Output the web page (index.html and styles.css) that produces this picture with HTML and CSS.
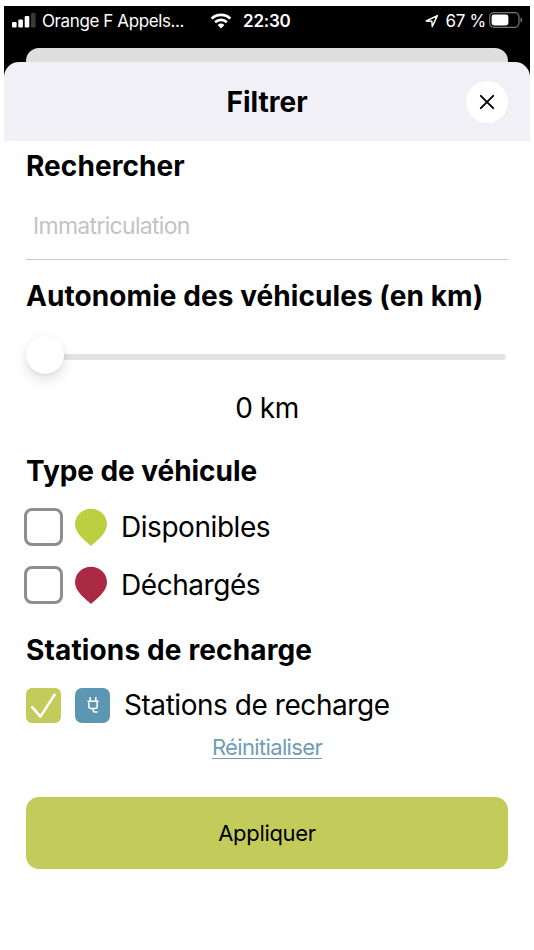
FILE: index.html
```
<!DOCTYPE html>
<html lang="fr">
<head>
  <meta charset="UTF-8">
  <title>Filtrer</title>
  <link rel="stylesheet" href="styles.css">
</head>
<body>
  <div class="phone">
    <div class="status">
      <svg class="signal" width="24" height="16" viewBox="0 0 24 16">
        <rect x="0" y="10" width="4.6" height="5.5" rx="1.2" fill="#fff"/>
        <rect x="6.3" y="7.5" width="4.6" height="8" rx="1.2" fill="#fff"/>
        <rect x="12.7" y="4" width="4.6" height="11.5" rx="1.2" fill="#fff"/>
        <rect x="19" y="1" width="4.6" height="14.5" rx="1.2" fill="#3a3a3a"/>
      </svg>
      <span class="carrier">Orange F Appels...</span>
      <svg class="wifi" width="22" height="16" viewBox="0 0 22 16">
        <path d="M1.6 5.6C6.8 .6 15.2 .6 20.4 5.6" fill="none" stroke="#fff" stroke-width="2.7"/>
        <path d="M5.1 9.2C8.4 6.1 13.6 6.1 16.9 9.2" fill="none" stroke="#fff" stroke-width="2.6"/>
        <path d="M7.6 11.9Q11 9 14.4 11.9L11 15.4Z" fill="#fff"/>
      </svg>
      <span class="time">22:30</span>
      <svg class="location" width="14" height="14" viewBox="0 0 14 14">
        <path d="M1.2 7L12.4 1.6L7.2 12.6L6.9 7.2Z" fill="none" stroke="#fff" stroke-width="1.4" stroke-linejoin="round"/>
      </svg>
      <span class="percent">67 %</span>
      <svg class="battery" width="34" height="16" viewBox="0 0 34 16">
        <rect x=".7" y=".7" width="29.3" height="14.6" rx="4.2" fill="none" stroke="#777" stroke-width="1.2"/>
        <rect x="2.6" y="2.6" width="16.8" height="10.8" rx="2.4" fill="#fff"/>
        <path d="M31.5 5.5Q33.3 6.2 33.3 8T31.5 10.5Z" fill="#777"/>
      </svg>
    </div>
    <div class="back-sheet"></div>
    <div class="header">
      <h1 class="title">Filtrer</h1>
      <button class="close" type="button" aria-label="Fermer">
        <svg width="16" height="16" viewBox="0 0 16 16">
          <path d="M1.8 1.8L14.2 14.2M14.2 1.8L1.8 14.2" stroke="#000" stroke-width="1.9" stroke-linecap="round"/>
        </svg>
      </button>
    </div>
  </div>
  <form class="content" action="#">
    <h2 class="t-search">Rechercher</h2>
    <input class="search" type="text" placeholder="Immatriculation">

    <h2 class="t-range">Autonomie des véhicules (en km)</h2>
    <div class="slider">
      <div class="knob"></div>
      <div class="track"></div>
    </div>
    <p class="value">0 km</p>

    <h2 class="t-type">Type de véhicule</h2>
    <label class="row">
      <span class="box"></span>
      <svg class="pin" width="32" height="38" viewBox="0 0 32 38">
        <path d="M16 38C11 33.4 0 25.5 0 16.5A16 15.8 0 0 1 32 16.5C32 25.5 21 33.4 16 38Z" fill="#bccf41"/>
      </svg>
      <span class="name">Disponibles</span>
    </label>
    <label class="row">
      <span class="box"></span>
      <svg class="pin" width="32" height="38" viewBox="0 0 32 38">
        <path d="M16 38C11 33.4 0 25.5 0 16.5A16 15.8 0 0 1 32 16.5C32 25.5 21 33.4 16 38Z" fill="#ab2a43"/>
      </svg>
      <span class="name">Déchargés</span>
    </label>

    <h2 class="t-station">Stations de recharge</h2>
    <label class="row row-station">
      <span class="box checked">
        <svg width="35" height="35" viewBox="0 0 35 35">
          <path d="M6.2 19.2L14.4 28.6L28.6 6.8" fill="none" stroke="#fff" stroke-width="2.6" stroke-linecap="round" stroke-linejoin="round"/>
        </svg>
      </span>
      <span class="plug">
        <svg width="35" height="35" viewBox="0 0 35 35" fill="none" stroke="#fff" stroke-width="1.5">
          <path d="M15.2 9V13.5M20.8 9V13.5M12.5 13.3H23.5M13.8 13.3V18.2Q13.8 20.4 16 20.4H20Q22.2 20.4 22.2 18.2V13.3M18 20.4V22.3Q18 24 19.7 24H22.5"/>
        </svg>
      </span>
      <span class="name">Stations de recharge</span>
    </label>
    <a class="reset" href="#">Réinitialiser</a>
    <button class="apply" type="button">Appliquer</button>
  </form>
</body>
</html>
```
FILE: styles.css
```
*{
  padding: 0;
  margin: 0;
  box-sizing: border-box;
}
body{
  padding-top: 6px;
  background-color: #fff;
  color: #000;
  font-family: Inter, "Liberation Sans", sans-serif;
}
svg{
  display: block;
  flex: none;
}
.phone{
  margin: 0 4px;
  background-color: #000;
}
.status{
  display: flex;
  align-items: center;
  height: 42px;
  padding: 0 7px 12px 8px;
  color: #fff;
  font-size: 17px;
  line-height: 20px;
  white-space: nowrap;
}
.signal{
  margin-top: -2px;
}
.carrier{
  width: 142px;
  margin-left: 6px;
  letter-spacing: -.4px;
}
.wifi{
  margin-left: 26px;
}
.time{
  margin-left: 11px;
  font-weight: 600;
  letter-spacing: -.2px;
}
.location{
  margin-left: auto;
}
.percent{
  margin-left: 7px;
  letter-spacing: -.3px;
}
.battery{
  margin: -2px 0 0 3px;
}
.back-sheet{
  height: 14px;
  margin: 0 22px;
  border-radius: 13px 13px 0 0;
  background-color: #dfdfdf;
}
.header{
  display: flex;
  align-items: center;
  justify-content: flex-end;
  height: 79px;
  padding-right: 22px;
  border-radius: 15px 15px 0 0;
  background-color: #f1f0f7;
}
.title{
  flex: 1;
  padding-left: 64px;
  font-size: 28px;
  font-weight: 700;
  line-height: 34px;
  text-align: center;
}
.close{
  display: flex;
  align-items: center;
  justify-content: center;
  width: 42px;
  height: 42px;
  border: none;
  border-radius: 50%;
  background-color: #fff;
}
.content{
  padding: 8px 26px 0;
}
h2{
  font-size: 28px;
  font-weight: 700;
  letter-spacing: .07px;
  line-height: 34px;
  white-space: nowrap;
}
.search{
  display: block;
  width: 100%;
  height: 77px;
  padding: 9px 7px 0;
  border: none;
  border-bottom: 1px solid #c8c8c9;
  outline: none;
  background: none;
  font-family: inherit;
  font-size: 23px;
  letter-spacing: -.7px;
}
.search::placeholder{
  color: #c3c3c6;
}
.t-range{
  margin-top: 19px;
}
.slider{
  display: flex;
  align-items: center;
  height: 38px;
  margin-top: 23px;
}
.knob{
  position: relative;
  width: 38px;
  height: 38px;
  border-radius: 50%;
  background-color: #fff;
  box-shadow: 0 6px 14px rgba(0,0,0,.12), 0 1px 3px rgba(0,0,0,.08);
}
.track{
  flex: 1;
  height: 6px;
  margin: 3px 2px 0 -4px;
  border-radius: 3px;
  background-color: #e4e4e6;
}
.value{
  margin-top: 17px;
  font-size: 28px;
  letter-spacing: -.5px;
  line-height: 34px;
  text-align: center;
}
.t-type{
  margin-top: 29px;
  letter-spacing: -.05px;
}
.row{
  display: flex;
  align-items: center;
  height: 58px;
  margin-left: -2px;
}
.t-type + .row{
  margin-top: 10px;
}
.box{
  width: 39px;
  height: 38px;
  border: 3px solid #8e8e92;
  border-radius: 8px;
}
.pin{
  margin-left: 12px;
}
.name{
  margin-left: 14px;
  font-size: 28px;
  letter-spacing: -.45px;
  line-height: 34px;
  white-space: nowrap;
}
.t-station{
  margin-top: 19px;
  letter-spacing: .14px;
}
.row-station{
  height: 36px;
  margin: 20px 0 0;
}
.checked{
  width: 35px;
  height: 35px;
  border: none;
  border-radius: 6px;
  background-color: #c3cc5b;
}
.plug{
  width: 35px;
  height: 35px;
  margin-left: 14px;
  border-radius: 7px;
  background-color: #5b97b2;
}
.reset{
  display: block;
  width: fit-content;
  margin: 11px auto 0;
  color: #6f9db6;
  font-size: 22px;
  letter-spacing: -.65px;
  line-height: 26px;
  text-decoration-thickness: 1px;
  text-underline-offset: 3px;
}
.apply{
  display: block;
  width: 100%;
  height: 72px;
  margin-top: 37px;
  border: none;
  border-radius: 13px;
  background-color: #c3cc5b;
  color: #000;
  font-family: inherit;
  font-size: 22px;
  letter-spacing: -.3px;
}
```
